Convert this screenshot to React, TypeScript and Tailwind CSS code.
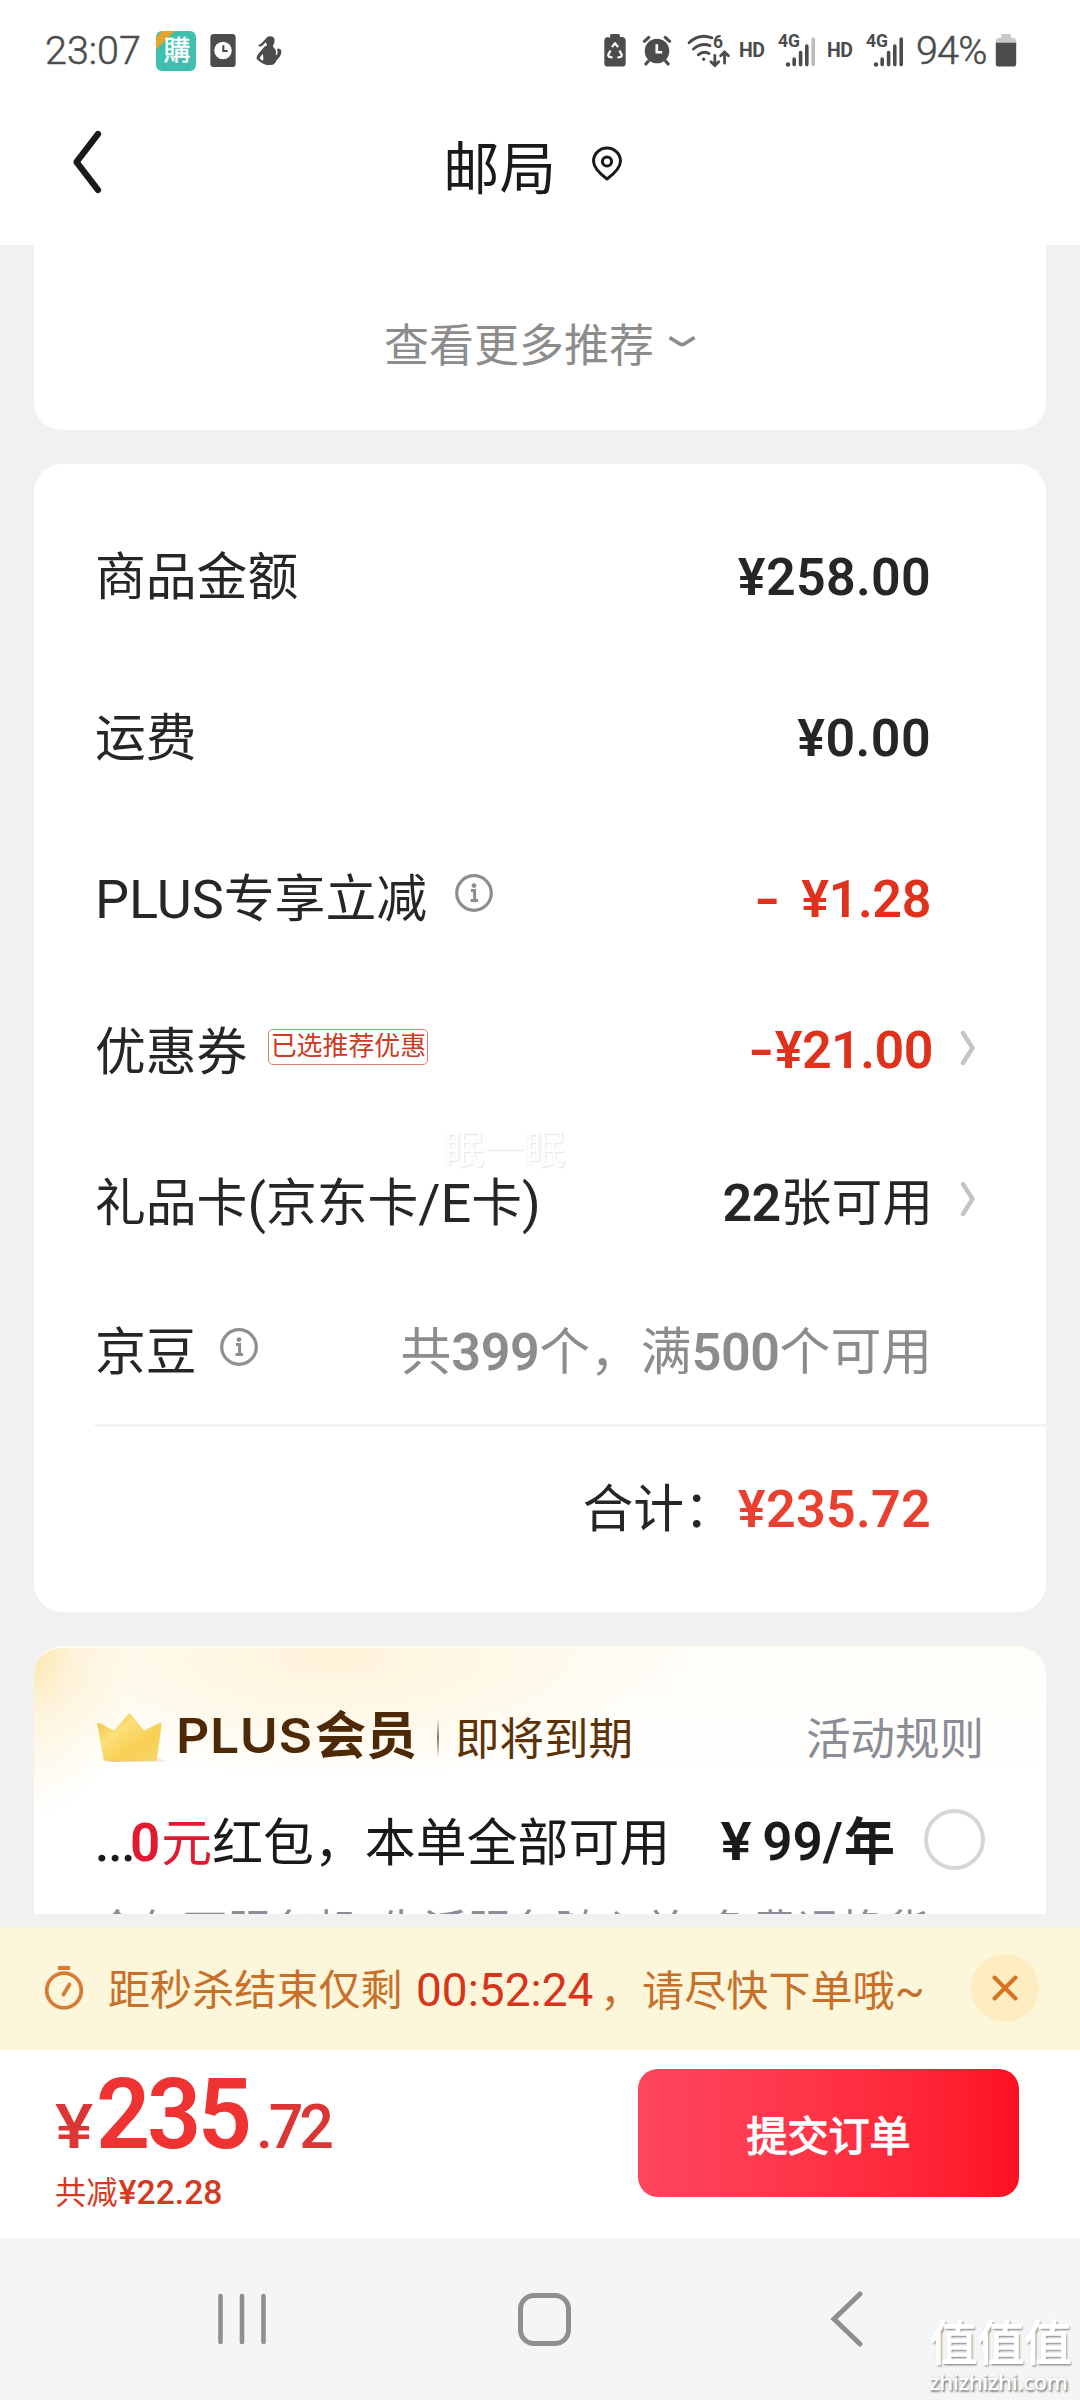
import type { ReactNode } from "react";

const FONT = "font-['Roboto','Noto_Sans_CJK_SC',sans-serif]";

function InfoIcon({ className }: { className: string }) {
  return (
    <svg width="40" height="40" viewBox="0 0 40 40" fill="none" className={className}>
      <circle cx="20" cy="20" r="17.3" stroke="#8e8e8e" strokeWidth="3.2" />
      <circle cx="20" cy="12.6" r="2.4" fill="#8e8e8e" />
      <path d="M17 17.600h3.600v9.600M16.600 27.400h7.400" stroke="#8e8e8e" strokeWidth="3" />
    </svg>
  );
}

function Arrow() {
  return (
    <svg width="18" height="38" viewBox="0 0 18 38" fill="none" className="mr-[68px] ml-[27px] -mt-[10px]">
      <path d="M3 4l9.500 15L3 34" stroke="#c4c4c4" strokeWidth="4.400" strokeLinecap="round" strokeLinejoin="round" />
    </svg>
  );
}

function Row({ label, children, className }: { label: ReactNode; children: ReactNode; className: string }) {
  return (
    <div className={`flex items-center justify-between pl-[61px] text-[50.800px] whitespace-nowrap ${className}`}>
      <div className="flex items-center">{label}</div>
      <div className="flex items-center">{children}</div>
    </div>
  );
}

function Signal({ faded, className }: { faded?: boolean; className: string }) {
  return (
    <svg width="40" height="36" viewBox="0 0 40 36" className={`overflow-visible ${className}`}>
      <text x="0" y="14" fontFamily="Roboto" fontWeight="700" fontSize="17.500" fill="#4c4c4c">4G</text>
      <circle cx="10" cy="31.500" r="2.200" fill="#4c4c4c" />
      <g strokeWidth="3.600" strokeLinecap="round" stroke="#4c4c4c">
        <path d="M16.200 26v5.600M22.600 19.500v12.100M28.800 13v18.600" />
        <path d="M35.200 6v25.600" stroke={faded ? "#bdbdbd" : "#4c4c4c"} />
      </g>
    </svg>
  );
}

function StatusBar() {
  return (
    <div className="flex h-[101px] items-center pl-[45px] text-[#4c4c4c]">
      <span className="w-[98px] text-[39.500px] leading-none font-light [-webkit-text-stroke:0.5px_#4c4c4c]">23:07</span>
      <span className="relative ml-[13px] flex h-10 w-10 items-center justify-center overflow-hidden rounded-[6px] bg-[#3fbfae] text-[27px] leading-none text-white">
        <span className="absolute top-[2px] left-[-14px] h-[9px] w-10 -rotate-45 bg-[#e5a32f]" />
        <span className="relative pt-[1px] pl-[2px] [-webkit-text-stroke:0.4px_#fff]">購</span>
      </span>
      <svg width="28" height="35" viewBox="0 0 28 36" className="ml-[13px]">
        <rect x="1" y="1" width="26" height="34" rx="3.500" fill="#4c4c4c" />
        <circle cx="14" cy="18" r="9" fill="#fff" />
        <path d="M14.300 12.500v6h4.500" stroke="#4c4c4c" strokeWidth="2.200" fill="none" />
      </svg>
      <svg width="28" height="32" viewBox="0 0 28 32" className="ml-[18px]" fill="#4c4c4c">
        <path d="M10.500 4C12 .2 19 0 19.500 4.500c.2 3-.5 4.500-1.500 6 0 1.500 1 2.500 2.200 3.800 1.200 2 .8 4.200.6 6.200 2-.8 2-3.500 1.400-5.500-.4-1.200.8-2 1.800-1.200 2.600.7 2.800 2.700 2 5.200-.8 2.500-2.600 4.500-4.600 6.500-1 3-3 4.500-6 4.500-3 .2-5 0-7-1.200-2.500-1.300-5-2.800-6.900-5.300.4-4 3.500-6.500 6-9.500 1-1.500 2-3 4.500-3.600 0-1.400-1-2-1.300-3.400C9.500 8.500 8.500 10 5.800 11.500 4.500 11.800 3.200 11 3.300 10c2.700-.5 4-3 7.200-6zM7.800 19c-1.800 1.500-2.800 3-3 4.500 1 1 2 1.800 3.200 2.300.6-2 .4-4.500-.2-6.800z" />
      </svg>
      <svg width="24" height="35" viewBox="0 0 24 36" className="ml-[320px]">
        <path d="M7 5V2.500Q7 1 8.500 1h7Q17 1 17 2.500V4h2.500Q23 4.500 23 8v23q0 3.500-3.500 3.500h-15Q1 34.500 1 31V8q0-3.500 3.500-4z" fill="#4c4c4c" />
        <g stroke="#fff" strokeWidth="2.200" fill="none" strokeLinejoin="round">
          <path d="M8.800 14.500L12 10.500l3.200 4" />
          <path d="M7.400 18L5 22.500q0 2.500 4.500 2.500M16.600 18l2.400 4.500q0 2.500-4.500 2.500" />
        </g>
      </svg>
      <svg width="30" height="31" viewBox="0 0 30 32" className="ml-[15px]">
        <circle cx="15" cy="16.500" r="12.700" fill="#4c4c4c" />
        <path d="M2 6.500L6.500 2.500M28 6.500L23.500 2.500M6 27l-2.500 3M24 27l2.500 3" stroke="#4c4c4c" strokeWidth="3.200" strokeLinecap="round" />
        <path d="M14.800 9.500v8.300h5.500" stroke="#fff" strokeWidth="2.800" fill="none" />
      </svg>
      <svg width="46" height="35" viewBox="0 0 46 36" className="ml-[14px] overflow-visible" fill="none" stroke="#4c4c4c" strokeWidth="2.900" strokeLinecap="round">
        <path d="M2.500 10Q13 0 26 5M7 16.500q8-7 17-3.500M12 22.500q5-4.500 11-1.500" />
        <circle cx="17.500" cy="27" r="1.700" fill="#4c4c4c" stroke="none" />
        <path d="M29 23v10M25 29.500l4 4 4-4M39 31V20M35 23.500l4-4 4 4" />
        <text x="27" y="15.500" fontFamily="Roboto" fontWeight="700" fontSize="18" fill="#4c4c4c" stroke="none">6</text>
      </svg>
      <span className="ml-[7px] w-[26px] text-[19.500px] leading-none font-bold tracking-[-0.500px]">HD</span>
      <Signal faded className="ml-[13px]" />
      <span className="ml-[9px] w-[26px] text-[19.500px] leading-none font-bold tracking-[-0.500px]">HD</span>
      <Signal className="ml-[13px]" />
      <span className="ml-[10px] w-[74px] text-[39.500px] leading-none font-light tracking-[-0.800px] [-webkit-text-stroke:0.5px_#4c4c4c]">94%</span>
      <svg width="24" height="35" viewBox="0 0 24 36" className="ml-[4px]">
        <path d="M7 5V2.500Q7 1 8.500 1h7Q17 1 17 2.500V5h2.500Q22.500 5.500 22.500 9V12h-21V9Q1.500 5.500 4.500 5z" fill="#c9c9c9" />
        <path d="M1.500 10h21v21.500q0 3-3 3h-15q-3 0-3-3z" fill="#4c4c4c" />
      </svg>
    </div>
  );
}

function TitleBar() {
  return (
    <div className="flex h-[144px] text-[#1a1a1a]">
      <svg width="36" height="72" viewBox="0 0 36 72" fill="none" className="mt-[25px] ml-[69px]">
        <path d="M29 8L7.500 36 29 64" stroke="#1a1a1a" strokeWidth="6.200" strokeLinecap="round" strokeLinejoin="round" />
      </svg>
      <h1 className="mt-[34px] ml-[338px] w-[113px] text-[56.500px] leading-[70px] font-normal whitespace-nowrap">邮局</h1>
      <svg width="34" height="38" viewBox="0 0 34 38" fill="none" className="mt-[44px] ml-[34px]" stroke="#1a1a1a" strokeWidth="3">
        <path d="M17 34Q3.500 24 3.500 16a13.500 13 0 0 1 27 0Q30.500 24 17 34z" strokeLinejoin="round" />
        <circle cx="17" cy="16.500" r="4.600" />
      </svg>
    </div>
  );
}

function Minus({ className }: { className: string }) {
  return <span className={`inline-block origin-right scale-x-135 ${className}`}>-</span>;
}

function Summary() {
  return (
    <section className="mx-[34px] mt-[34px] h-[1148px] rounded-[28px] bg-white pt-[33px] leading-[60px] text-[#262626]">
      <Row className="h-[161px]" label="商品金额">
        <b className="mr-[115px] text-[52px] font-semibold tracking-[0.300px]">¥258.00</b>
      </Row>
      <Row className="h-[161px]" label="运费">
        <b className="mr-[115px] text-[52px] font-semibold tracking-[0.400px]">¥0.00</b>
      </Row>
      <Row className="h-[161px]" label={<><span className="text-[54px]">PLUS</span>专享立减<InfoIcon className="-mt-[14px] ml-[27px]" /></>}>
        <b className="mr-[115px] text-[52px] font-semibold tracking-[-0.400px] text-[#df311b]"><Minus className="mr-[9px]" /> ¥1.28</b>
      </Row>
      <Row
        className="h-[146px]"
        label={
          <>
            优惠券
            <span className="-mt-[12px] ml-[21px] flex h-9 w-[160px] items-center justify-center rounded-[5px] border-[1.500px] border-[#dd7d70] text-[25.900px] leading-none text-[#cb3a22]">
              已选推荐优惠
            </span>
          </>
        }
      >
        <b className="-mt-[5px] text-[52px] font-semibold tracking-[-0.500px] text-[#df311b]"><Minus className="mr-[1px]" />¥21.00</b>
        <Arrow />
      </Row>
      <div className="relative">
        <Row className="h-[155px]" label={<>礼品卡<span className="text-[54px]">(</span>京东卡<span className="text-[54px]">/E</span>卡<span className="text-[54px]">)</span></>}>
          <span><b className="text-[52px] font-semibold tracking-[-0.700px]">22</b>张可用</span>
          <Arrow />
        </Row>
        <span className="absolute top-[-1px] left-[410px] text-[40.500px] leading-[50px] text-white [text-shadow:1px_1px_1.5px_#e3e3e8,-0.5px_-0.5px_1px_#f0f0f3]">眠一眠</span>
      </div>
      <Row className="h-[143px]" label={<>京豆<InfoIcon className="-mt-[12px] ml-[22px]" /></>}>
        <span className="mr-[114px] text-[#8c8c8c]">共<b className="text-[52px] font-semibold tracking-[-0.400px]">399</b>个，满<b className="text-[52px] font-semibold tracking-[-0.400px]">500</b>个可用</span>
      </Row>
      <div className="ml-[61px] h-[3px] bg-[#f3f3f3]" />
      <div className="flex h-[166px] items-center justify-end pr-[115px] text-[50.800px]">
        <span className="mr-[3px]">合计：</span>
        <b className="text-[52px] font-semibold tracking-[0.300px] text-[#ea4030]">¥235.72</b>
      </div>
    </section>
  );
}

function Crown() {
  return (
    <svg width="80" height="52" viewBox="0 0 80 52">
      <defs>
        <linearGradient id="gold" x1="0" y1="0" x2="1" y2="1">
          <stop offset="0" stopColor="#f2b93c" />
          <stop offset="0.350" stopColor="#fbdf78" />
          <stop offset="0.650" stopColor="#f9cf55" />
          <stop offset="1" stopColor="#f7d66a" />
        </linearGradient>
        <linearGradient id="shade" x1="0" x2="1">
          <stop offset="0" stopColor="#a98a4a" />
          <stop offset="1" stopColor="#a98a4a" stopOpacity="0" />
        </linearGradient>
      </defs>
      <path d="M10 49.500h68l-14-3z" fill="url(#shade)" />
      <path d="M3.500 13q-1.500-2.500 2-2L20 18.500 34 2.500q1.500-2 3 0L50 18.500l15.500-7.500q2.500-.500 2 2L63 47q-.300 2-2.500 2H12q-2.300 0-2.600-2z" fill="url(#gold)" />
    </svg>
  );
}

function PlusCard() {
  return (
    <section className="mx-[34px] mt-[34px] h-[268px] overflow-hidden rounded-t-[28px] border-t-2 border-[#fffaf0] bg-white bg-[radial-gradient(ellipse_100px_170px_at_0_0,#fde7ae_0,#fdeec890_40%,transparent_100%),radial-gradient(ellipse_360px_120px_at_300px_10px,#fff4da_0,#fff8e8_45%,transparent_100%),linear-gradient(#fffdf8_0,#ffffff_50%)] pl-[61px] whitespace-nowrap">
      <div className="mt-[60px] -ml-[1px] flex h-[60px] items-center text-[44.500px] leading-[60px] text-[#5c3209]">
        <Crown />
        <span className="-mt-[4px] ml-[2px] flex w-[244px] font-['Inter','Noto_Sans_CJK_SC'] text-[48px] font-semibold text-[#4e2905]">
          <span className="w-[138px] origin-left scale-x-108 tracking-[0.500px]">PLUS</span>
          <span className="ml-[1px] text-[51px] font-bold">会员</span>
        </span>
        <span className="ml-[17px] h-10 w-[2px] bg-linear-to-b from-transparent via-[#8c7452] to-transparent" />
        <span className="ml-[16px] pt-[3px]">即将到期</span>
        <span className="mr-[62px] ml-auto pt-[3px] text-[#8a8c96]">活动规则</span>
      </div>
      <div className="mt-[43px] flex h-[64px] items-center text-[50.900px] leading-[60px] text-[#1a1a1a]">
        <span className="w-[627px]"><b className="inline-block w-[35px] font-medium tracking-[-1px]">...</b><b className="mr-[1px] text-[53px] font-semibold text-[#e01a30]">0</b><span className="text-[#e01a30]">元</span>红包，本单全部可用</span>
        <b className="-mt-[2px] w-[176px] text-[53px] font-semibold"><span className="mr-[12px] inline-block scale-x-110">¥</span>99/<span className="ml-[1px] text-[51px] font-bold">年</span></b>
        <span className="-mt-[7px] ml-[26px] h-[61px] w-[61px] rounded-full border-[4.500px] border-[#d6d6d6]" />
      </div>
      <p className="mt-[27px] text-[44px] leading-[60px] text-[#8a8c96]">全年可服务机<span className="inline-block w-5" />生活服务随心单<span className="inline-block w-[22px]" />免费退换货</p>
    </section>
  );
}

function CountdownBar() {
  return (
    <div className="mt-[13px] flex h-[123px] items-center bg-[#fcf7da] text-[42.100px] leading-[60px] whitespace-nowrap text-[#c8702a]">
      <svg width="44" height="48" viewBox="0 0 44 48" fill="none" className="-mt-1 ml-[42px]" stroke="#d77c38" strokeWidth="3.800">
        <circle cx="22" cy="27.500" r="17.300" />
        <path d="M16 5h12" strokeWidth="4" />
        <path d="M21.500 31.500l6-10" strokeLinecap="round" />
      </svg>
      <span className="mt-[5px] ml-[22px] w-[308px]">距秒杀结束仅剩</span>
      <span className="mt-[2px] w-[177px] text-[46px] text-[#d8341b]">00:52:24</span>
      <span className="mt-[5px] ml-[7px] w-[323px]">，请尽快下单哦<span className="text-[44px]">~</span></span>
      <span className="-mt-[1px] ml-[48px] flex h-[68px] w-[68px] items-center justify-center rounded-full bg-[#fdedc0]">
        <svg width="28" height="28" viewBox="0 0 28 28" stroke="#d9721f" strokeWidth="4" strokeLinecap="round">
          <path d="M3.500 3.500l21 21M24.500 3.500l-21 21" />
        </svg>
      </span>
    </div>
  );
}

function CheckoutBar() {
  return (
    <div className="flex h-[188px] items-start justify-between bg-white pr-[61px] pl-[55px]">
      <div>
        <div className="mt-[19px] flex h-[92px] items-baseline text-[61px] leading-[92px] font-medium text-[#dc3535]">
          <span className="w-[41px] origin-left scale-x-118">¥</span>
          <b className="w-[160px] origin-left scale-x-[0.97] text-[98px] font-semibold tracking-[-3.500px] text-[#ee3332]">235</b>
          <span className="tracking-[-4.200px]">.72</span>
        </div>
        <div className="mt-[12px] text-[31.300px] leading-[40px] text-[#d43a22]">共减<b className="ml-[1px] text-[33.700px] font-medium">¥22.28</b></div>
      </div>
      <button className="mt-[19px] h-32 w-[381px] rounded-[20px] bg-linear-to-r from-[#fe465f] to-[#fe0f22] pt-[8px] text-[41px] leading-none font-normal text-white [-webkit-text-stroke:1.300px_#fff]">提交订单</button>
    </div>
  );
}

function NavBar() {
  return (
    <div className="relative flex h-[162px] items-center bg-[#f5f5f5]">
      <svg width="50" height="54" viewBox="0 0 50 54" className="ml-[217px]" stroke="#8f8f8f" strokeWidth="4.600" strokeLinecap="round">
        <path d="M3.500 4v46M25 4v46M46.500 4v46" />
      </svg>
      <span className="ml-[251px] h-[53px] w-[53px] rounded-[16px] border-[5px] border-[#8f8f8f]" />
      <svg width="34" height="58" viewBox="0 0 34 58" fill="none" className="ml-[258px]" stroke="#8f8f8f" strokeWidth="5" strokeLinecap="round">
        <path d="M31 4L5 29l26 25" />
      </svg>
      <div className="absolute top-[81px] left-[929px] flex w-[142px] flex-col text-white [text-shadow:1.5px_1.5px_2px_#858585,0_0_2px_#c0c0c0]">
        <span className="text-[48px] leading-[50px] font-normal tracking-[-0.800px] [-webkit-text-stroke:1.500px_#fff]">值值值</span>
        <span className="font-['Noto_Sans'] text-[22.300px] leading-[26px] font-medium tracking-[-0.400px]">zhizhizhi.com</span>
      </div>
    </div>
  );
}

export default function App() {
  return (
    <main className={`h-[2400px] w-[1080px] overflow-hidden bg-[#f1f1f1] ${FONT}`}>
      <header className="h-[245px] bg-white">
        <StatusBar />
        <TitleBar />
      </header>
      <section className="mx-[34px] flex h-[185px] items-start justify-center rounded-b-[28px] bg-white">
        <span className="mt-[72px] ml-[1px] text-[45px] leading-[60px] text-[#8c8c8c]">查看更多推荐</span>
        <svg width="30" height="16" viewBox="0 0 30 16" fill="none" className="mt-[89px] ml-[13px]">
          <path d="M2.500 3.500L12 9.500q3 2 6 0l9.500-6" stroke="#8c8c8c" strokeWidth="3.800" />
        </svg>
      </section>
      <Summary />
      <PlusCard />
      <CountdownBar />
      <CheckoutBar />
      <NavBar />
    </main>
  );
}
